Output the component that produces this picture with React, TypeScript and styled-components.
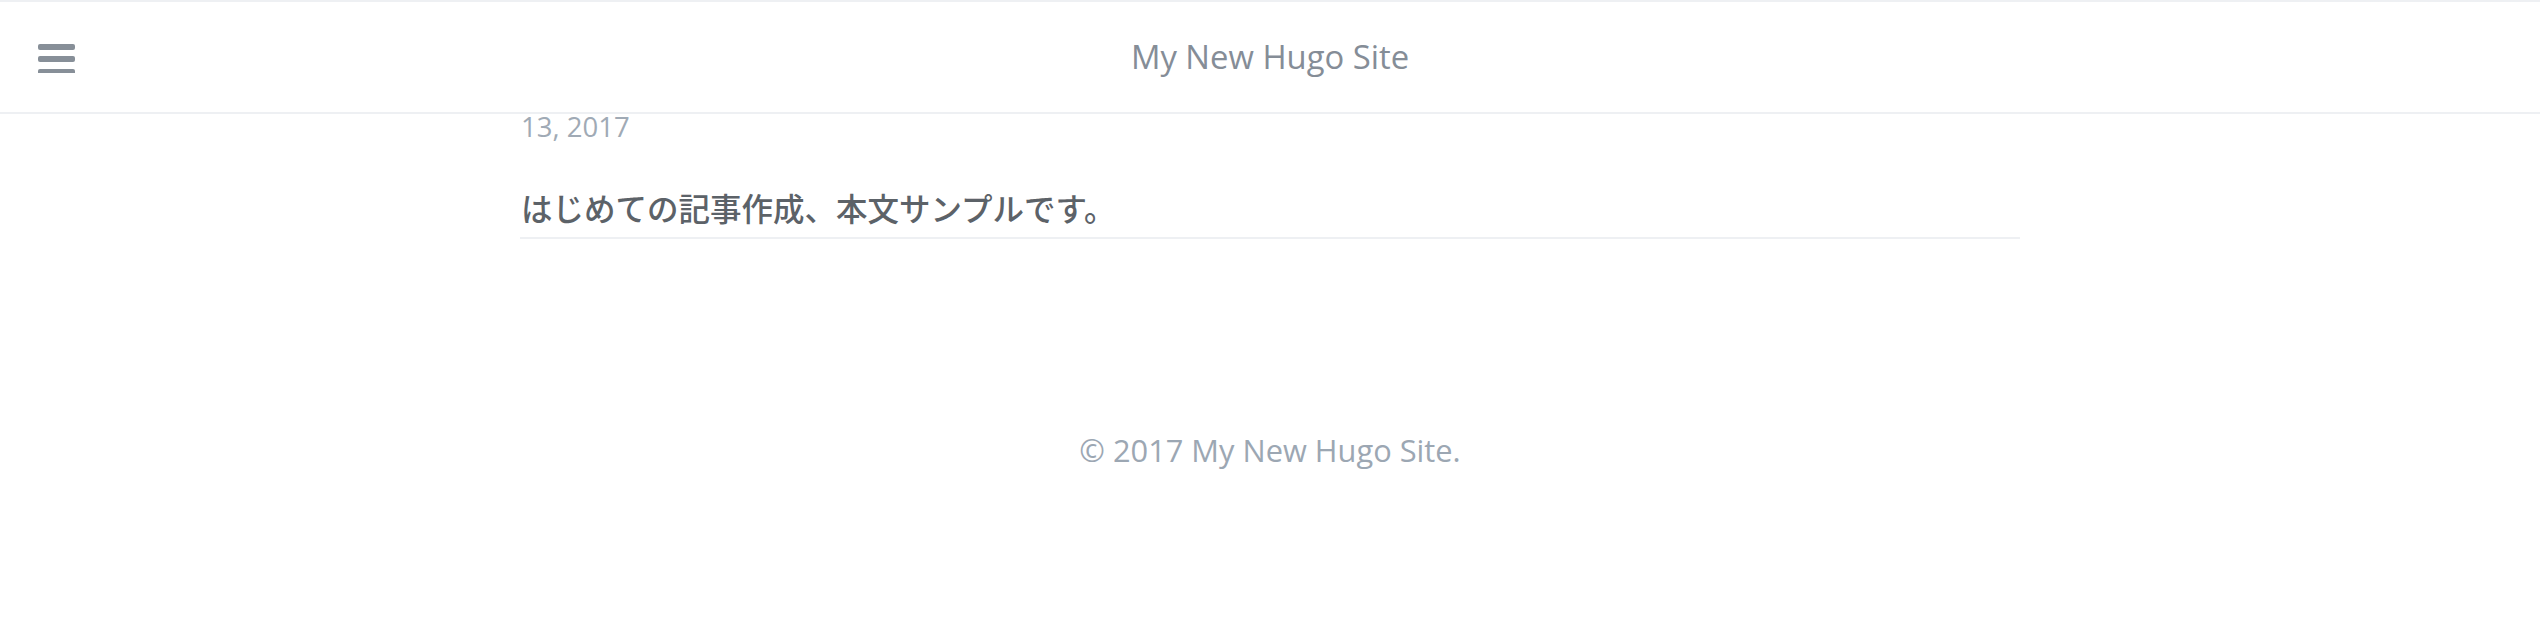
import React from "react";
import styled, { createGlobalStyle } from "styled-components";

const GlobalStyle = createGlobalStyle`
  html, body {
    margin: 0;
    padding: 0;
    background: #ffffff;
  }
  body {
    font-family: "Open Sans", "Noto Sans CJK JP", sans-serif;
  }
`;

const Page = styled.div`
  display: flex;
  flex-direction: column;
  min-height: 618px;
`;

const Header = styled.header`
  display: grid;
  grid-template-columns: 1fr auto 1fr;
  align-items: center;
  height: 110px;
  border-top: 2px solid #eef0f3;
  border-bottom: 2px solid #eef0f3;
  padding: 0 0 0 38px;
`;

const MenuButton = styled.button`
  justify-self: start;
  display: flex;
  align-items: center;
  padding: 0;
  margin: 0;
  border: 0;
  background: none;
  cursor: pointer;
  width: 37px;
  height: 32px;
`;

const SiteTitle = styled.a`
  font-size: 32.8px;
  color: #858d97;
  text-decoration: none;
  line-height: 1;
  margin-right: 38px;
`;

const Main = styled.main`
  width: 1500px;
  margin: 0 auto;
`;

const PostDate = styled.div`
  font-size: 27.5px;
  line-height: 24px;
  color: #a0aab5;
  margin-top: 1px;
  padding-left: 1px;
`;

const PostTitle = styled.h2`
  margin: 47px 0 0;
  padding: 0 0 5px 1px;
  font-size: 31.5px;
  font-weight: 500;
  line-height: 46px;
  color: #5c6268;
  border-bottom: 2px solid #eef0f3;
`;

const Footer = styled.footer`
  margin-top: 190px;
  text-align: center;
  font-size: 30.8px;
  color: #9ca7b3;
`;

const HamburgerIcon = () => (
  <svg width="37" height="32" viewBox="0 0 37 32" fill="#878f98">
    <rect x="0" y="3" width="37" height="6" rx="2" />
    <rect x="0" y="15" width="37" height="6" rx="2" />
    <rect x="0" y="28" width="37" height="6" rx="2" />
  </svg>
);

export default function App() {
  return (
    <>
      <GlobalStyle />
      <Page>
        <Header>
          <MenuButton aria-label="menu">
            <HamburgerIcon />
          </MenuButton>
          <SiteTitle href="#">My New Hugo Site</SiteTitle>
          <span />
        </Header>
        <Main>
          <PostDate>13, 2017</PostDate>
          <PostTitle>はじめての記事作成、本文サンプルです。</PostTitle>
        </Main>
        <Footer>© 2017 My New Hugo Site.</Footer>
      </Page>
    </>
  );
}
